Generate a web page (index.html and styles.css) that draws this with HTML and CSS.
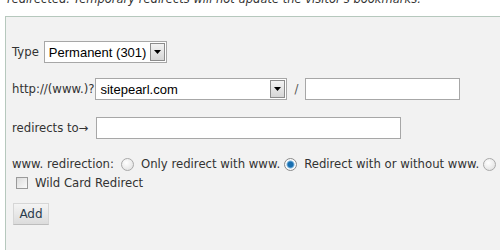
FILE: index.html
```html
<!DOCTYPE html>
<html>
<head>
<meta charset="utf-8">
<link rel="stylesheet" href="styles.css">
</head>
<body>
<p class="note">redirected. Temporary redirects will not update the visitor's bookmarks.</p>
<form class="box">
  <div class="row r1">
    <label class="lbl">Type</label>
    <span class="sel sel-type">
      <span class="sel-text">Permanent (301)</span>
      <span class="sel-btn"><svg width="7" height="4" viewBox="0 0 7 4"><path d="M0 0h7L3.5 4z" fill="#000"/></svg></span>
    </span>
  </div>
  <div class="row r2">
    <label class="lbl">http://(www.)?</label>
    <span class="sel sel-dom">
      <span class="sel-text">sitepearl.com</span>
      <span class="sel-btn"><svg width="7" height="4" viewBox="0 0 7 4"><path d="M0 0h7L3.5 4z" fill="#000"/></svg></span>
    </span>
    <span class="slash">/</span>
    <input class="txt txt-path" type="text">
  </div>
  <div class="row r3">
    <label class="lbl">redirects to→</label>
    <input class="txt txt-to" type="text">
  </div>
  <div class="row r4">
    <span class="lbl">www. redirection:</span>
    <span class="radio first"></span><span class="opt">Only redirect with www.</span>
    <span class="radio on"></span><span class="opt">Redirect with or without www.</span>
    <span class="radio"></span>
  </div>
  <div class="row r5">
    <span class="check"></span><span class="opt">Wild Card Redirect</span>
  </div>
  <div class="row r6">
    <span class="btn">Add</span>
  </div>
</form>
</body>
</html>
```
FILE: styles.css
```css
html, body {
  margin: 0;
  padding: 0;
  overflow: hidden;
  background: #fff;
}
body {
  width: 500px;
  height: 250px;
  font-family: "DejaVu Sans", Verdana, sans-serif;
  font-size: 11.7px;
  color: #333;
}
.note {
  margin: -8px 0 0 7px;
  height: 14px;
  line-height: 14px;
  font-style: italic;
  font-size: 11.5px;
  color: #333;
  white-space: nowrap;
}
.box {
  margin: 10px 0 0 5px;
  width: 600px;
  height: 300px;
  box-sizing: border-box;
  border: 1px solid #b6c8bd;
  background: #f2f2f2;
  padding: 24px 0 0 6px;
}
.row {
  display: flex;
  align-items: center;
  white-space: nowrap;
}
.lbl { color: #333; }
.r1 { height: 22px; }
.r1 .lbl { margin-right: 5px; }
.r2 { height: 22px; margin-top: 15px; }
.r2 .lbl { margin-right: 1px; }
.r3 { height: 22px; margin-top: 17px; }
.r3 .lbl { margin-right: 8px; }
.r4 { height: 16px; margin-top: 17px; }
.r5 { height: 14px; margin-top: 4px; padding-left: 4px; }
.r6 { margin-top: 13px; padding-left: 1px; }

.sel {
  display: flex;
  align-items: stretch;
  box-sizing: border-box;
  height: 22px;
  border: 1px solid #a7a7a7;
  background: #fff;
  font-family: "Liberation Sans", Arial, sans-serif;
  font-size: 13px;
  color: #000;
}
.sel-text {
  flex: 1;
  display: flex;
  align-items: center;
  padding-left: 4px;
}
.sel-type { width: 123px; }
.sel-dom { width: 192px; }
.sel-btn {
  width: 15px;
  margin: 1px 1px 1px 0;
  box-sizing: border-box;
  border: 1px solid #8c8c8c;
  background: linear-gradient(#f3f3f3, #d6d6d6);
  display: flex;
  align-items: center;
  justify-content: center;
}
.slash {
  margin: 0 7px 0 7px;
  color: #555;
}
.txt {
  box-sizing: border-box;
  height: 22px;
  border: 1px solid #a7a7a7;
  background: #fff;
  margin: 0;
  padding: 0;
}
.txt-path { width: 155px; }
.txt-to { width: 305px; }

.radio {
  flex: none;
  width: 13px;
  height: 13px;
  box-sizing: border-box;
  border-radius: 50%;
  border: 1px solid #a9a9a9;
  background: radial-gradient(circle at 40% 35%, #fff, #dcdcdc);
  margin: 0 7px 0 4px;
}
.radio.first { margin-left: 7px; }
.radio.on {
  background: radial-gradient(circle, #1a6fb0 0 2.5px, #7bb4dd 3.5px, #fff 4.5px, #e2e2e2);
  border-color: #8a8a8a;
}
.opt { color: #333; }
.check {
  flex: none;
  width: 12px;
  height: 12px;
  box-sizing: border-box;
  border: 1px solid #9a9a9a;
  background: linear-gradient(135deg, #dcdcdc, #fafafa);
  margin-right: 7px;
}
.btn {
  display: inline-flex;
  align-items: center;
  justify-content: center;
  box-sizing: border-box;
  width: 36px;
  height: 22px;
  border: 1px solid #d6d6d6;
  border-bottom-color: #bdbdbd;
  background: linear-gradient(#f4f4f4, #dcdcdc);
  font-size: 12px;
  color: #2b3b4b;
}
```
